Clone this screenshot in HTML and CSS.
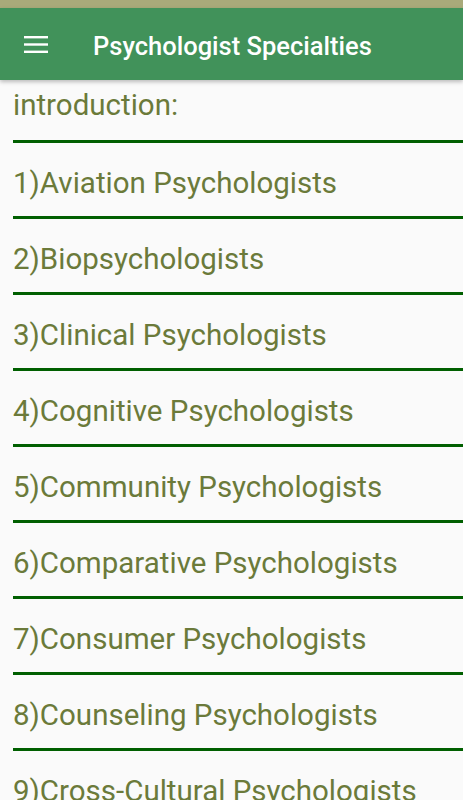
FILE: index.html
```html
<!DOCTYPE html>
<html lang="en">
<head>
  <meta charset="UTF-8">
  <meta name="viewport" content="width=device-width, initial-scale=1.0">
  <title>Psychologist Specialties</title>
  <link rel="stylesheet" href="styles.css">
</head>
<body>

  <div class="status-bar"></div>

  <div class="app-bar">
    <svg class="menu-icon" width="24" height="18" viewBox="0 0 24 18">
      <rect x="0" y="0" width="24" height="2.4" fill="#fff"/>
      <rect x="0" y="7.3" width="24" height="2.4" fill="#fff"/>
      <rect x="0" y="14.6" width="24" height="2.4" fill="#fff"/>
    </svg>
    <h1 class="title">Psychologist Specialties</h1>
  </div>

  <div class="list">
    <div class="item first">introduction:</div>
    <div class="item">1)Aviation Psychologists</div>
    <div class="item">2)Biopsychologists</div>
    <div class="item">3)Clinical Psychologists</div>
    <div class="item">4)Cognitive Psychologists</div>
    <div class="item">5)Community Psychologists</div>
    <div class="item">6)Comparative Psychologists</div>
    <div class="item">7)Consumer Psychologists</div>
    <div class="item">8)Counseling Psychologists</div>
    <div class="item">9)Cross-Cultural Psychologists</div>
  </div>

</body>
</html>
```

FILE: styles.css
```css
body {
  font-family: 'Roboto', sans-serif;
  background-color: #fafafa;
  margin: 0;
  padding: 0;
  height: 800px;
  overflow: hidden;
}

.status-bar {
  height: 8px;
  background-color: #a9aa7a;
}

.app-bar {
  height: 72px;
  background-color: #41925a;
  display: flex;
  align-items: center;
  box-shadow: 0 2px 4px rgba(0, 0, 0, 0.25);
  position: relative;
}

.menu-icon {
  margin-left: 24px;
  margin-top: 1px;
}

.title {
  margin: 3px 0 0 45px;
  font-size: 25.5px;
  font-weight: 500;
  color: #fff;
}

.list {
  padding-left: 13px;
}

.item {
  font-size: 29.5px;
  line-height: 32px;
  color: #6b7a3a;
  padding: 24px 0 17px 0;
  border-bottom: 3px solid #005f00;
  white-space: nowrap;
}

.item.first {
  padding: 9px 0 19px 0;
}
```
